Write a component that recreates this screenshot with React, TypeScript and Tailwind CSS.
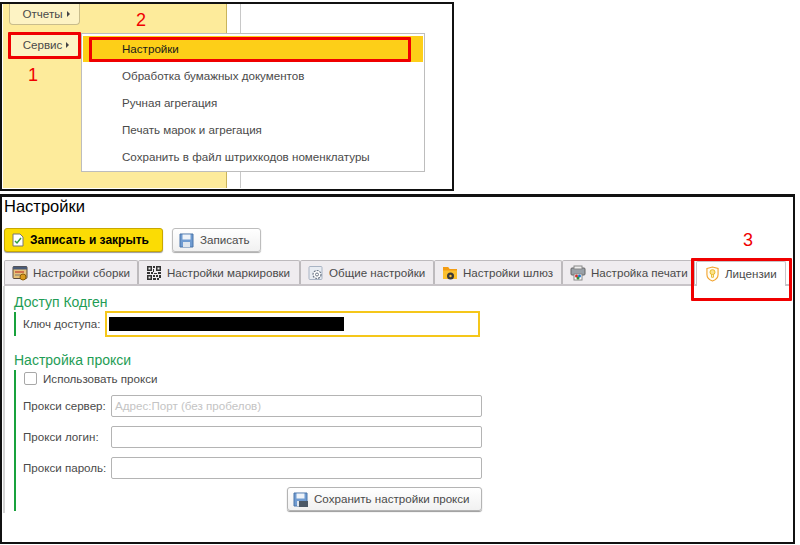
import React from 'react';

const font = "font-['Liberation_Sans',Arial,sans-serif]";

function TabIcon({ kind }: { kind: string }) {
  if (kind === 'build') {
    return (
      <svg width="16" height="16" viewBox="0 0 16 16">
        <rect x="1" y="1.5" width="14" height="12" rx="1" fill="#e8c27a" stroke="#5b4a3a" />
        <rect x="1" y="1.5" width="14" height="3" fill="#4a5a78" />
        <path d="M3 7h9" stroke="#c0392b" strokeWidth="1.2" />
        <path d="M3 10h5" stroke="#777" />
        <circle cx="11" cy="12" r="3" fill="#d99a1c" stroke="#8a5c0a" />
      </svg>
    );
  }
  if (kind === 'qr') {
    return (
      <svg width="16" height="16" viewBox="0 0 16 16" fill="#333">
        <path d="M1 1h5v5H1zM10 1h5v5h-5zM1 10h5v5H1z" />
        <path d="M2.5 2.5h2v2h-2zM11.500 2.500h2v2h-2zM2.500 11.500h2v2h-2z" fill="#eee" />
        <path d="M7 1h2v2H7zM7 4h1v3H7zM1 7h3v2H1zM5 7h2v2H5zM8 8h3v1H8zM12 7h3v2h-3zM7 10h2v2H7zM10 10h2v2h-2zM13 10h2v3h-2zM7 13h3v2H7zM11 13h2v2h-2z" />
      </svg>
    );
  }
  if (kind === 'gear') {
    return (
      <svg width="16" height="16" viewBox="0 0 16 16" fill="none">
        <rect x="1" y="1.500" width="13" height="13" rx="1" stroke="#a9b4c4" fill="#e8ecf2" />
        <circle cx="9" cy="9.500" r="4" stroke="#6b7686" strokeWidth="1.200" fill="#fff" strokeDasharray="2 1" />
        <circle cx="9" cy="9.500" r="1.500" stroke="#6b7686" />
      </svg>
    );
  }
  if (kind === 'folder') {
    return (
      <svg width="16" height="16" viewBox="0 0 16 16">
        <path d="M1 2h5l1.500 2H15v10H1z" fill="#fbc02d" />
        <path d="M1 2h5l1.500 2H15v1.500H1z" fill="#f39c12" />
        <circle cx="8.500" cy="11" r="3.500" fill="#3a3a3a" />
        <circle cx="8.500" cy="11" r="1.200" fill="#fbc02d" />
      </svg>
    );
  }
  if (kind === 'print') {
    return (
      <svg width="16" height="16" viewBox="0 0 16 16">
        <rect x="1" y="3" width="14" height="7" rx="1" fill="#9aa1a8" stroke="#666" />
        <rect x="4" y="1" width="8" height="3" fill="#eee" stroke="#888" />
        <rect x="4" y="9" width="8" height="6" fill="#fff" stroke="#888" />
        <circle cx="6.500" cy="11" r="1.500" fill="#d32f2f" />
        <circle cx="9.500" cy="11" r="1.500" fill="#1976d2" />
        <circle cx="8" cy="13" r="1.500" fill="#388e3c" />
      </svg>
    );
  }
  return (
    <svg width="13" height="16" viewBox="0 0 14 17" fill="none">
      <path d="M1 2.500 7 1l6 1.500V9c0 3.500-3 6-6 7-3-1-6-3.500-6-7z" stroke="#f2a32e" strokeWidth="1.200" fill="#fffdf5" />
      <circle cx="7" cy="6.500" r="2.700" stroke="#e6b422" fill="#fbe28a" />
      <path d="M6 9v3h2V9" stroke="#e6b422" />
    </svg>
  );
}

function FloppyIcon({ ok }: { ok?: boolean }) {
  return (
    <svg width="15" height="15" viewBox="0 0 15 15" className="shrink-0">
      <path d="M1 1h13v13H1z" fill="#6f9bd1" stroke="#4a74a8" />
      <rect x="3.500" y="1.500" width="8" height="5" fill="#eef3f9" />
      <rect x="4" y="9" width="7" height="5" fill="#dfe6ee" />
      {ok && <rect x="6" y="9" width="9" height="6" fill="#4d5a68" />}
    </svg>
  );
}

const tabs = [
  { label: 'Настройки сборки', icon: 'build', w: 'w-[134px]' },
  { label: 'Настройки маркировки', icon: 'qr', w: 'w-[162px]' },
  { label: 'Общие настройки', icon: 'gear', w: 'w-[134px]' },
  { label: 'Настройки шлюз', icon: 'folder', w: 'w-[128px]' },
  { label: 'Настройка печати', icon: 'print', w: 'w-[133px]' },
];

const menuItems = [
  'Обработка бумажных документов',
  'Ручная агрегация',
  'Печать марок и агрегация',
  'Сохранить в файл штрихкодов номенклатуры',
];

const proxyRows = [
  { label: 'Прокси сервер:', placeholder: 'Адрес:Порт (без пробелов)', mt: 'mt-0' },
  { label: 'Прокси логин:', placeholder: '', mt: 'mt-[9px]' },
  { label: 'Прокси пароль:', placeholder: '', mt: 'mt-[9px]' },
];

function SideButton({ label, className }: { label: string; className: string }) {
  return (
    <div className={`w-[71px] flex items-center justify-center gap-[4px] pl-[3px] border border-[#c9bd8c] rounded-[4px] bg-[#fdf3c4] ${className}`}>
      {label}
      <span className="w-0 h-0 border-y-[3px] border-y-transparent border-l-[3px] border-l-[#444]" />
    </div>
  );
}

export default function App() {
  return (
    <div className={`relative w-[800px] h-[545px] bg-white overflow-hidden text-[11.6px] whitespace-nowrap text-[#4a4a4a] ${font}`}>
      {/* top shot: menu */}
      <div className="relative mt-[2px] w-[454px] h-[189px] border-2 border-[#111] bg-white flex overflow-hidden">
        <div className="w-[224px] h-[184px] ml-[1px] bg-[#fdeb9b] border-r border-[#c9b45c] pl-[6px]">
          <SideButton label="Отчеты" className="h-[21px] rounded-t-none border-t-0" />
          <SideButton label="Сервис" className="h-[24px] mt-[8px]" />
        </div>
        <div className="w-[1px] h-[184px] ml-[13px] bg-[#c8c8c8]" />

        <div className="absolute left-[79px] top-[29px] w-[344px] h-[139px] bg-white border border-[#bdbdbd] pt-[2px] px-[1px]">
          <div className="h-[26px] bg-[#fdcf18] pl-[39px] flex items-center text-[#1a1a1a]">Настройки</div>
          {menuItems.map((item) => (
            <div key={item} className="h-[27px] pl-[39px] flex items-center">{item}</div>
          ))}
        </div>
      </div>

      {/* bottom shot: settings form */}
      <div className="relative mt-[3px] w-[795px] h-[350px] border-t-[3px] border-x-2 border-b-2 border-[#111] bg-white">
        <div className="h-[22px] pl-[2px] text-[16.500px] leading-[18px] text-black">Настройки</div>

        <div className="flex gap-[9px] ml-[2px] mt-[9px]">
          <button className="w-[159px] h-[24px] flex items-center gap-[6px] pl-[7px] rounded-[3px] bg-[#fbdc04] border border-[#c9a800] font-bold text-[12px] text-black shadow-[0_1px_1px_#999]">
            <svg width="12" height="14" viewBox="0 0 12 14">
              <path d="M1 1h7l3 3v9H1z" fill="#fff" stroke="#777" />
              <path d="M3 8l2 2 4-5" stroke="#2e9e3f" strokeWidth="1.500" fill="none" />
            </svg>
            Записать и закрыть
          </button>
          <button className="w-[89px] h-[24px] flex items-center gap-[6px] pl-[6px] rounded-[3px] bg-gradient-to-b from-white to-[#f1f1f1] border border-[#bdbdbd] shadow-[0_1px_1px_#aaa]">
            <FloppyIcon />
            Записать
          </button>
        </div>

        <div className="flex items-end ml-[2px] mt-[9px] h-[25px] w-[788px] border-b-[2px] border-[#c8c4c8]">
          {tabs.map((t) => (
            <div key={t.label} className={`${t.w} h-[24px] flex items-center gap-[5px] pl-[7px] bg-[#efecef] border-t border-r border-l border-[#bdbabd] rounded-t-[2px]`}>
              <TabIcon kind={t.icon} />
              {t.label}
            </div>
          ))}
          <div className="ml-[1px] w-[90px] h-[25px] -mb-[2px] flex items-center gap-[6px] pl-[9px] bg-white border-t border-x border-[#c8c4c8] rounded-t-[2px]">
            <TabIcon kind="lic" />
            Лицензии
          </div>
        </div>

        <div className="ml-[1px] w-[2px] h-[227px] bg-[#d4d4d4] float-left" />
        <div className="pl-[12px] pt-[7px]">
          <div className="text-[14px] leading-[18px] text-[#1f9d55]">Доступ Кодген</div>
          <div className="flex items-center h-[24px] mt-[1px] border-l-2 border-[#18a23c] pl-[7px]">
            <span className="w-[82px]">Ключ доступа:</span>
            <div className="w-[375px] h-[26px] border-2 border-[#f5c71a] flex items-center pl-[2px]">
              <div className="w-[235px] h-[14px] bg-black" />
            </div>
          </div>

          <div className="text-[14px] leading-[18px] text-[#1f9d55] mt-[15px]">Настройка прокси</div>
          <div className="border-l-2 border-[#18a23c] pl-[7px] h-[141px] mt-[1px]">
            <div className="flex items-center h-[17px] gap-[6px] pl-[1px]">
              <span className="w-[13px] h-[13px] border border-[#a8a8a8] rounded-[2px] bg-white" />
              Использовать прокси
            </div>
            <div className="mt-[8px]">
              {proxyRows.map((r) => (
                <div key={r.label} className={`flex items-center h-[22px] ${r.mt}`}>
                  <span className="w-[88px]">{r.label}</span>
                  <div className="w-[371px] h-[22px] border border-[#b4b4b4] rounded-[2px] pl-[3px] flex items-center text-[#c4c4c4]">
                    {r.placeholder}
                  </div>
                </div>
              ))}
            </div>
            <div className="flex justify-end w-[459px] mt-[8px]">
              <button className="w-[195px] h-[24px] flex items-center gap-[6px] pl-[5px] rounded-[3px] bg-gradient-to-b from-white to-[#f1f1f1] border border-[#b4b4b4] shadow-[0_1px_1px_#999]">
                <FloppyIcon ok />
                Сохранить настройки прокси
              </button>
            </div>
          </div>
        </div>
      </div>

      {/* red annotations */}
      <div className="absolute left-[8px] top-[32px] w-[73px] h-[27px] border-[3px] border-[#f00000] rounded-[1px]" />
      <div className="absolute left-[89px] top-[37px] w-[322px] h-[25px] border-[3px] border-[#f00000] rounded-[1px]" />
      <div className="absolute left-[691px] top-[258px] w-[101px] h-[43px] border-[3px] border-[#f00000] rounded-[1px]" />
      <span className="absolute left-[28px] top-[65px] text-[18px] leading-[20px] text-[#f00000]">1</span>
      <span className="absolute left-[136px] top-[10px] text-[18px] leading-[20px] text-[#f00000]">2</span>
      <span className="absolute left-[743px] top-[230px] text-[18px] leading-[20px] text-[#f00000]">3</span>
    </div>
  );
}
